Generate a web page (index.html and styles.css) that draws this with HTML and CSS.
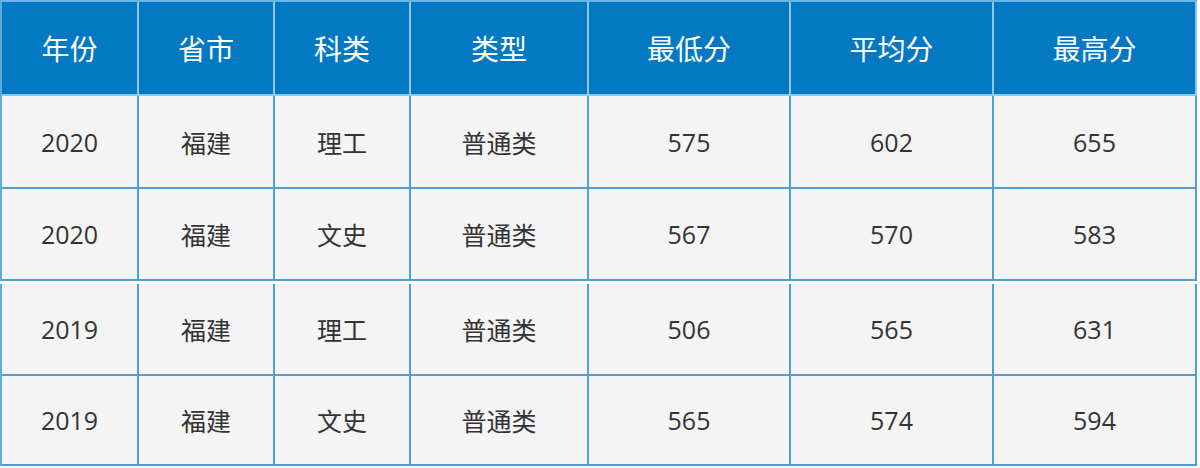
FILE: index.html
```html
<!DOCTYPE html>
<html lang="zh-CN">
<head>
<meta charset="utf-8">
<title>分数线</title>
<link rel="stylesheet" href="styles.css">
</head>
<body>
<div class="sheet">
  <table class="scores scores-top">
    <colgroup>
      <col class="c1"><col class="c2"><col class="c3"><col class="c4"><col class="c5"><col class="c6"><col class="c7">
    </colgroup>
    <thead>
      <tr class="head">
        <th>年份</th><th>省市</th><th>科类</th><th>类型</th><th>最低分</th><th>平均分</th><th>最高分</th>
      </tr>
    </thead>
    <tbody>
      <tr class="r1">
        <td>2020</td><td>福建</td><td>理工</td><td>普通类</td><td>575</td><td>602</td><td>655</td>
      </tr>
      <tr class="r2">
        <td>2020</td><td>福建</td><td>文史</td><td>普通类</td><td>567</td><td>570</td><td>583</td>
      </tr>
    </tbody>
  </table>
  <table class="scores scores-bottom">
    <colgroup>
      <col class="c1"><col class="c2"><col class="c3"><col class="c4"><col class="c5"><col class="c6"><col class="c7">
    </colgroup>
    <tbody>
      <tr class="r3">
        <td>2019</td><td>福建</td><td>理工</td><td>普通类</td><td>506</td><td>565</td><td>631</td>
      </tr>
      <tr class="r4">
        <td>2019</td><td>福建</td><td>文史</td><td>普通类</td><td>565</td><td>574</td><td>594</td>
      </tr>
    </tbody>
  </table>
</div>
</body>
</html>
```
FILE: styles.css
```css
* { box-sizing: border-box; }
html, body { margin: 0; padding: 0; background: #ffffff; }
body {
  width: 1200px;
  height: 468px;
  overflow: hidden;
  font-family: "Open Sans", "Noto Sans CJK SC", sans-serif;
}
.sheet {
  display: flex;
  flex-direction: column;
  gap: 3px;
  padding-left: 0;
}
.scores {
  border-collapse: separate;
  border-spacing: 0;
  table-layout: fixed;
  width: 1197px;
  border-left: 2px solid #5eabdf;
}
.scores-top { border-top: 2px solid #6cb4e4; }
.c1 { width: 137px; }
.c2 { width: 136px; }
.c3 { width: 136px; }
.c4 { width: 178px; }
.c5 { width: 202px; }
.c6 { width: 203px; }
.c7 { width: 203px; }
.scores th,
.scores td {
  padding: 0;
  text-align: center;
  vertical-align: middle;
  border-right: 2px solid #4f9fd6;
  border-bottom: 2px solid #4f9fd6;
}
.scores th {
  height: 94px;
  background: #0479c3;
  color: #ffffff;
  font-weight: normal;
  font-size: 28px;
  font-family: "Noto Sans CJK SC", sans-serif;
  border-right-color: #8ec6ec;
  border-bottom-color: #8ec6ec;
}
.scores td {
  background: #f4f4f4;
  color: #333333;
  font-size: 25px;
}
.r1 td { height: 93px; }
.r2 td { height: 92px; }
.r3 td { height: 92px; }
.r4 td { height: 90px; }
```
